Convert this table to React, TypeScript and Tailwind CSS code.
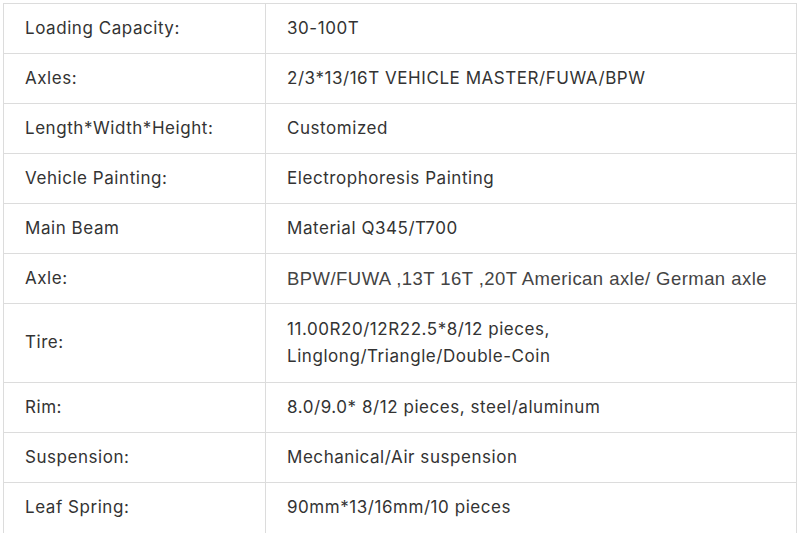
import React from "react";

const rows: { k: string; v: React.ReactNode; h?: string; arial?: boolean }[] = [
  { k: "Loading Capacity:", v: "30-100T" },
  { k: "Axles:", v: "2/3*13/16T VEHICLE MASTER/FUWA/BPW" },
  { k: "Length*Width*Height:", v: "Customized" },
  { k: "Vehicle Painting:", v: "Electrophoresis Painting" },
  { k: "Main Beam", v: "Material Q345/T700" },
  { k: "Axle:", v: "BPW/FUWA ,13T 16T ,20T American axle/ German axle", arial: true },
  {
    k: "Tire:",
    v: (
      <>
        11.00R20/12R22.5*8/12 pieces,
        <br />
        Linglong/Triangle/Double-Coin
      </>
    ),
    h: "tall",
  },
  { k: "Rim:", v: "8.0/9.0* 8/12 pieces, steel/aluminum" },
  { k: "Suspension:", v: "Mechanical/Air suspension" },
  { k: "Leaf Spring:", v: "90mm*13/16mm/10 pieces" },
];

export default function App() {
  return (
    <div className="w-[800px] h-[533px] bg-white overflow-hidden pt-[3px] pl-[3px]">
      <div
        className="w-[794px] border border-[#dcdcdc] text-[#333] text-[17px] tracking-[0.55px]"
        style={{ fontFamily: "Inter, Roboto, 'Liberation Sans', sans-serif" }}
      >
        {rows.map((r, i) => (
          <div
            key={i}
            className={`flex ${r.h ? "h-[79px]" : "h-[50px]"} ${i < rows.length - 1 ? "border-b border-[#dcdcdc]" : ""}`}
          >
            <div className="w-[262px] shrink-0 border-r border-[#dcdcdc] pl-[21px] flex items-center">
              {r.k}
            </div>
            <div
              className={`pl-[21px] flex items-center ${r.arial ? "text-[18.5px] tracking-[0.45px] text-[#444]" : ""} ${r.h ? "leading-[27px]" : ""}`}
              style={r.arial ? { fontFamily: "'Liberation Sans', Arial, sans-serif" } : undefined}
            >
              <div>{r.v}</div>
            </div>
          </div>
        ))}
      </div>
    </div>
  );
}
